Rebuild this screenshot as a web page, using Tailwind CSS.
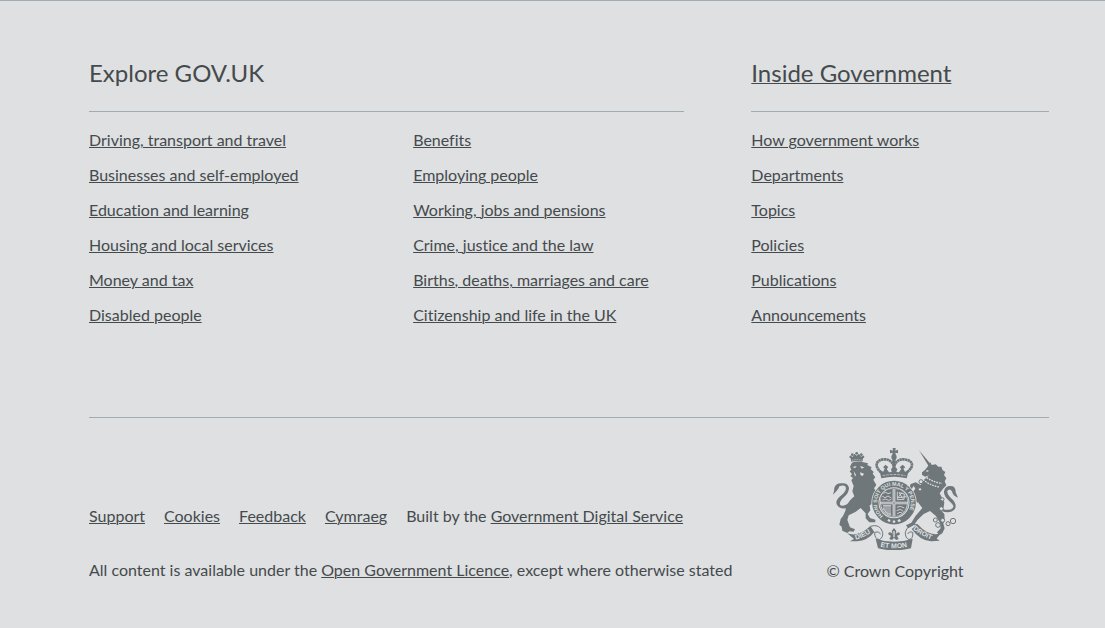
<!DOCTYPE html>
<html lang="en">
<head>
<meta charset="utf-8">
<meta name="viewport" content="width=device-width, initial-scale=1">
<title>GOV.UK footer</title>
<script src="https://cdn.jsdelivr.net/npm/@tailwindcss/browser@4"></script>
</head>
<body class="min-h-screen bg-[#dee0e2] font-['Lato',sans-serif] text-base/5 text-[#454a4c] [font-variant-ligatures:none]">
<footer class="border-t border-[#a1acb2] pt-[57px] pr-14 pb-[47px] pl-[89px]">
  <div class="grid grid-cols-[2fr_1fr] gap-x-[67px] pb-[92px]">
    <section>
      <h2 class="border-b border-[#a1acb2] pb-[23px] text-2xl/[30px]">Explore GOV.UK</h2>
      <div class="mt-[18px] grid grid-cols-2 gap-x-[53px]">
        <ul class="flex flex-col gap-[15px] underline decoration-1">
          <li><a href="#">Driving, transport and travel</a></li>
          <li><a href="#">Businesses and self-employed</a></li>
          <li><a href="#">Education and learning</a></li>
          <li><a href="#">Housing and local services</a></li>
          <li><a href="#">Money and tax</a></li>
          <li><a href="#">Disabled people</a></li>
        </ul>
        <ul class="flex flex-col gap-[15px] underline decoration-1">
          <li><a href="#">Benefits</a></li>
          <li><a href="#">Employing people</a></li>
          <li><a href="#">Working, jobs and pensions</a></li>
          <li><a href="#">Crime, justice and the law</a></li>
          <li><a href="#">Births, deaths, marriages and care</a></li>
          <li><a href="#">Citizenship and life in the UK</a></li>
        </ul>
      </div>
    </section>
    <section>
      <h2 class="border-b border-[#a1acb2] pb-[23px] text-2xl/[30px]"><a href="#" class="underline decoration-1">Inside Government</a></h2>
      <ul class="mt-[18px] flex flex-col gap-[15px] underline decoration-1">
        <li><a href="#">How government works</a></li>
        <li><a href="#">Departments</a></li>
        <li><a href="#">Topics</a></li>
        <li><a href="#">Policies</a></li>
        <li><a href="#">Publications</a></li>
        <li><a href="#">Announcements</a></li>
      </ul>
    </section>
  </div>
  <div class="flex items-end justify-between border-t border-[#a1acb2] pt-[29px]">
    <div>
      <ul class="flex flex-wrap gap-x-[19px]">
        <li><a href="#" class="underline decoration-1">Support</a></li>
        <li><a href="#" class="underline decoration-1">Cookies</a></li>
        <li><a href="#" class="underline decoration-1">Feedback</a></li>
        <li><a href="#" class="underline decoration-1">Cymraeg</a></li>
        <li>Built by the <a href="#" class="underline decoration-1">Government Digital Service</a></li>
      </ul>
      <p class="mt-[34px] mb-px">All content is available under the <a href="#" class="underline decoration-1">Open Government Licence</a>, except where otherwise stated</p>
    </div>
    <a href="#" class="flex w-[308px] flex-col items-center gap-[11px]">
      <svg class="h-[103px] w-[127px]" viewBox="36 21 381 309" fill="#6f777b" aria-hidden="true">
        <defs>
          <path id="garter" d="M193 230A51 51 0 1 1 251 230"/>
          <path id="dieu" d="M107 299Q136 292 162 271"/>
          <path id="etmon" d="M177 319Q222 331 270 319"/>
          <path id="droit" d="M279 268Q307 291 344 302"/>
        </defs>
        <!-- lion -->
        <path d="M94 65L90 46L98 51L103 41L110 47L117 41L123 50L131 46L127 65Q110 61 94 65Z"/>
        <circle cx="110" cy="40" r="4"/><circle cx="97" cy="44" r="4"/><circle cx="124" cy="44" r="4"/><circle cx="91" cy="51" r="3"/><circle cx="130" cy="51" r="3"/>
        <path fill="none" stroke="#dee0e2" stroke-width="2" stroke-dasharray="4 3" d="M96 61Q111 57 126 61"/>
        <path d="M96 68Q112 62 130 67L144 70L142 75L155 82L152 87L161 96L158 101L166 112L160 119L169 135L162 145L171 157L163 168L160 190L149 196L151 211L143 222L150 234L166 239L166 247L148 247L137 235L137 220L122 204L106 216L86 226L82 240L90 262L105 268L101 275L88 274L82 279L67 272L65 260L58 254L62 237L69 228L76 213L80 195L91 180L103 169L97 154L101 138L94 121L99 114L91 108L96 103L89 94L94 89L90 80Z"/>
        <path d="M145 178Q160 168 170 178L172 187L166 190L160 185L150 191ZM148 151L160 158L167 154L162 168L150 167Z"/>
        <path d="M81 205Q52 208 49 189Q48 178 65 165Q81 151 77 140Q70 133 58 139Q55 150 39 164Q43 154 43 143Q49 129 64 130Q82 127 87 143Q87 158 73 170Q57 184 60 194Q66 202 84 191Z"/>
        <path fill="#dee0e2" d="M98 81L110 78L105 85ZM120 78L133 82L125 86ZM120 97L132 101L128 108L122 106ZM101 93L108 104L105 110Z"/>
        <!-- unicorn -->
        <path d="M297 31L336 77L328 82Z"/>
        <path d="M322 81L331 67L335 75L347 73L355 80L364 80L368 91L376 96L372 105L379 115L374 124L379 136L369 146L359 160L373 187L371 202L362 210L373 222L374 239L370 251L374 265L367 280L357 286L351 277L362 265L360 248L347 227L330 213L311 222L293 239L283 254L265 265L258 256L274 248L286 229L307 204L296 190L289 171L279 158L286 145L280 138L274 151L267 145L272 132L287 127L302 135L312 119L327 106L315 110L306 104L306 97L315 90Z"/>
        <path d="M278 152L298 163L303 180L292 188L282 182L288 178L284 169L270 167L270 160Z"/>
        <path d="M365 206Q390 214 398 204Q405 198 390 185Q370 168 372 154Q376 135 398 139Q407 143 407 157L414 173Q398 168 396 154Q388 143 382 153Q381 163 395 176Q413 193 404 208Q391 223 364 213Z"/>
        <g fill="none" stroke="#dee0e2" stroke-width="4"><path d="M309 119Q331 137 359 141M320 113Q343 128 366 130" stroke-dasharray="5 3"/><path d="M319 94L325 92"/></g>
        <g fill="#dee0e2" stroke="#6f777b" stroke-width="3"><circle cx="303" cy="125" r="6"/><circle cx="367" cy="178" r="5"/><circle cx="364" cy="206" r="6"/><circle cx="346" cy="240" r="6"/><circle cx="354" cy="255" r="7"/><circle cx="368" cy="241" r="6"/><circle cx="384" cy="251" r="6"/><circle cx="399" cy="243" r="8"/><circle cx="300" cy="148" r="5"/></g>
        <!-- garter and shield -->
        <circle cx="222" cy="188" r="68" fill="#dee0e2"/>
        <circle cx="222" cy="188" r="56" fill="none" stroke="#6f777b" stroke-width="19"/>
        <circle cx="222" cy="188" r="43" fill="#dee0e2" stroke="#6f777b" stroke-width="2"/>
        <path d="M189 159Q202 147 218 147V185H182Q182 170 189 159ZM226 147Q243 148 255 161Q262 173 262 185H226ZM183 193H218V229Q187 222 183 193ZM226 193H261Q257 223 226 229Z"/>
        <path fill="none" stroke="#6f777b" stroke-width="2" d="M222 147V229M183 189H261"/>
        <g fill="none" stroke="#dee0e2" stroke-width="2.5"><path d="M190 160L197 157L204 161L213 158M187 169L195 173L204 168L214 174M187 180L197 177L206 181L214 178M232 155V179L252 178L253 162L237 158L248 175M246 157L234 173L259 170M231 202L241 199L253 204M230 212L241 208L250 214M231 221L240 217L246 219M192 198V210M198 197V219M204 197V223M210 197V225M189 197L213 197M190 205Q198 222 213 223"/></g>
        <text fill="#dee0e2" font-family="Liberation Sans, sans-serif" font-weight="700" font-size="16"><textPath href="#garter" startOffset="4">HONI SOIT QUI MAL Y PENSE</textPath></text>
        <path fill="#dee0e2" d="M205 237L212 240L209 246L202 243ZM222 240L227 245L222 250L217 245ZM239 237L243 243L236 247L232 241Z"/>
        <!-- crown -->
        <path d="M218 24H227L226 32L234 29V40L226 38L228 47H216L218 38L210 40V29L219 32Z"/>
        <circle cx="222" cy="51" r="8"/>
        <path fill="none" stroke="#6f777b" stroke-width="8" stroke-dasharray="7 1" d="M183 97C160 77 170 59 192 58Q213 57 222 78Q231 57 252 58C280 61 284 79 261 97"/>
        <path d="M217 57H227L226 92H218Z"/>
        <path d="M178 90L190 95L194 85L189 82L197 74L205 82L200 87L207 97L215 96L213 87L222 78L232 87L229 96L237 97L244 87L239 82L248 74L256 82L250 86L255 95L267 90L260 115Q222 106 184 115Z"/>
        <path fill="none" stroke="#dee0e2" stroke-width="2" stroke-dasharray="8 3" d="M188 107Q222 100 257 107"/>
        <!-- motto ribbon -->
        <path d="M82 280Q116 292 151 258L163 276Q143 302 111 304H90L102 297Z"/>
        <path d="M362 280Q328 292 293 253L275 267Q300 302 333 304L359 302L350 296Z"/>
        <path fill="none" stroke="#6f777b" stroke-width="3" d="M151 259Q180 250 188 277Q190 293 178 299Q163 296 164 277Q176 272 182 282M293 254Q263 250 256 277Q255 293 267 299Q281 295 278 277Q267 273 263 282"/>
        <path d="M167 296Q222 315 278 296L273 325Q222 337 174 325Z"/>
        <path d="M222 264L229 273L227 281Q238 272 240 281Q240 286 231 287L236 297L229 300L222 294L216 300L208 297L213 287Q204 286 205 279Q210 273 218 281L215 273Z"/>
        <path fill="#dee0e2" d="M220 273H224V292H220Z"/>
        <g fill="#dee0e2" font-family="Liberation Sans, sans-serif" font-weight="700" font-size="21"><text><textPath href="#dieu">DIEU</textPath></text><text><textPath href="#etmon" startOffset="4">ET MON</textPath></text><text font-size="20"><textPath href="#droit">DROIT</textPath></text></g>
      </svg>
      <span>© Crown Copyright</span>
    </a>
  </div>
</footer>
</body>
</html>
